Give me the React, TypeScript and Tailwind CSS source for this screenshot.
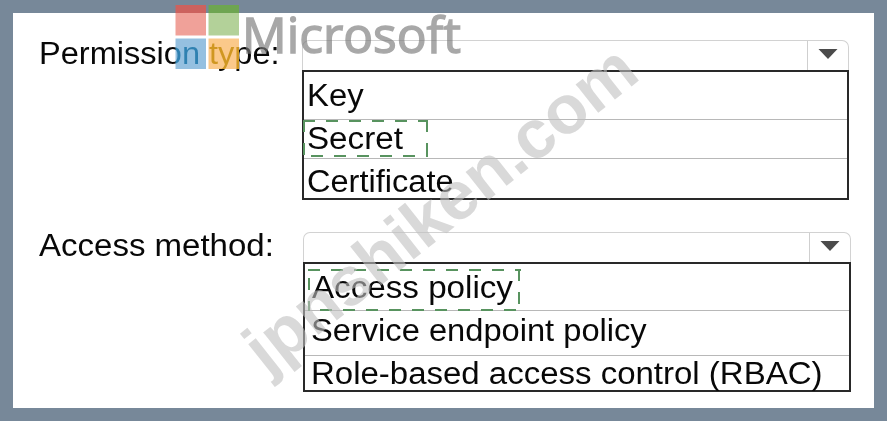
const fields = [
  {
    label: "Permission type:",
    labelClass: "w-[289px] pl-[26px]",
    selectClass: "w-[547px]",
    textClass: "scale-x-[1.05]",
    rows: [
      { text: "Key", textClass: "scale-x-[1.06]", rowClass: "h-[48px] pl-[3px] pt-[5px]" },
      { text: "Secret", textClass: "scale-x-[1.07]", rowClass: "h-[39px] pl-[3px]", dash: "-left-px top-0 w-[125px] h-[37px]", line: "M0 1H125M8 36H125M1 0V37M124 0V37" },
      { text: "Certificate", textClass: "scale-x-[1.05]", rowClass: "h-[39px] pl-[3px] pt-[4px]" },
    ],
  },
  {
    label: "Access method:",
    labelClass: "w-[290px] pl-[26px]",
    selectClass: "w-[548px]",
    textClass: "scale-x-[1.065]",
    rows: [
      { text: "Access policy", textClass: "scale-x-[1.07]", rowClass: "h-[47px] pl-[7px] pt-[5px]", dash: "left-[3px] top-[5px] w-[213px] h-[42px]", line: "M0 1H213M12 41H213M1 9V42M211 0V42" },
      { text: "Service endpoint policy", textClass: "scale-x-[1.053]", rowClass: "h-[45px] pl-[6px] pt-px" },
      { text: "Role-based access control (RBAC)", textClass: "scale-x-[1.064]", rowClass: "h-[35px] pl-[6px]", lift: "-mt-px" },
    ],
  },
];

const baseText = "block origin-left whitespace-nowrap text-[31px] leading-[38px]";

function Dropdown({ field }: { field: (typeof fields)[number] }) {
  return (
    <div className={field.selectClass}>
      {/* Closed select */}
      <div className="flex h-[30px] rounded-t-[7px] border border-b-0 border-[#d2d2d2]">
        <div className="flex-1" />
        <div className="flex w-[41px] justify-center border-l border-[#cfcfcf]">
          <svg className="mt-[8px] h-[10px] w-[20px]" viewBox="0 0 20 10">
            <path d="M0.5 0H19.5L10 10Z" fill="#4b4b4b" />
          </svg>
        </div>
      </div>

      {/* Options */}
      <ul className="border-2 border-[#292929]">
        {field.rows.map((row) => (
          <li
            key={row.text}
            className={`relative border-b border-[#b8b8b8] last:border-b-0 ${row.rowClass}`}
          >
            {"dash" in row && (
              <svg className={`absolute ${row.dash}`} fill="none">
                <path d={row.line} stroke="#58935f" strokeWidth="2" strokeDasharray="12 11" />
              </svg>
            )}
            <span className={`${baseText} ${row.textClass} ${"lift" in row ? row.lift : ""}`}>
              {row.text}
            </span>
          </li>
        ))}
      </ul>
    </div>
  );
}

export default function App() {
  return (
    <main className="relative h-[421px] w-[887px] overflow-hidden bg-[#778899] p-[13px] font-['Liberation_Sans',Arial,sans-serif] text-[#080808]">
      <div className="flex h-[395px] w-[861px] flex-col gap-[32px] bg-white pt-[27px]">
        {fields.map((field) => (
          <div key={field.label} className="flex">
            <div className={`shrink-0 ${field.labelClass}`}>
              <span className={`${baseText} ${field.textClass} -mt-[5px]`}>{field.label}</span>
            </div>
            <Dropdown field={field} />
          </div>
        ))}
      </div>

      {/* Logo tiles: screen tints the dark text, multiply tints the paper */}
      <svg
        className="pointer-events-none absolute inset-0 mix-blend-screen"
        width="887"
        height="421"
      >
        <path d="M175.5 38.5H206V69H175.5Z" fill="#4aa9c8" />
        <path d="M208.5 38.5H239V69H208.5Z" fill="#d3be37" />
      </svg>
      <svg
        className="pointer-events-none absolute inset-0 mix-blend-multiply"
        width="887"
        height="421"
      >
        <path d="M175.5 13H206V35.5H175.5Z" fill="#f0a199" />
        <path d="M208.5 13H239V35.5H208.5Z" fill="#b3d199" />
        <path d="M175.5 38.5H206V69H175.5Z" fill="#95c0e0" />
        <path d="M208.5 38.5H239V69H208.5Z" fill="#fbc98a" />
      </svg>

      {/* Watermarks */}
      <svg className="pointer-events-none absolute inset-0" width="887" height="421">
        <path d="M175.5 5H206V13H175.5Z" fill="#cc625e" />
        <path d="M208.5 5H239V13H208.5Z" fill="#6ea551" />
        <text
          transform="translate(267 375.5) rotate(-38.4)"
          fontSize="68.4"
          fontWeight="700"
          fill="#bfbfbf"
          fillOpacity="0.6"
        >
          jpnshiken.com
        </text>
        <text
          x="242"
          y="53"
          fontSize="48.5"
          fill="#7a7a7a"
          stroke="#7a7a7a"
          strokeWidth="1.4"
          textLength="219"
          lengthAdjust="spacingAndGlyphs"
          className="font-['Open_Sans'] opacity-65"
        >
          Microsoft
        </text>
      </svg>
    </main>
  );
}
